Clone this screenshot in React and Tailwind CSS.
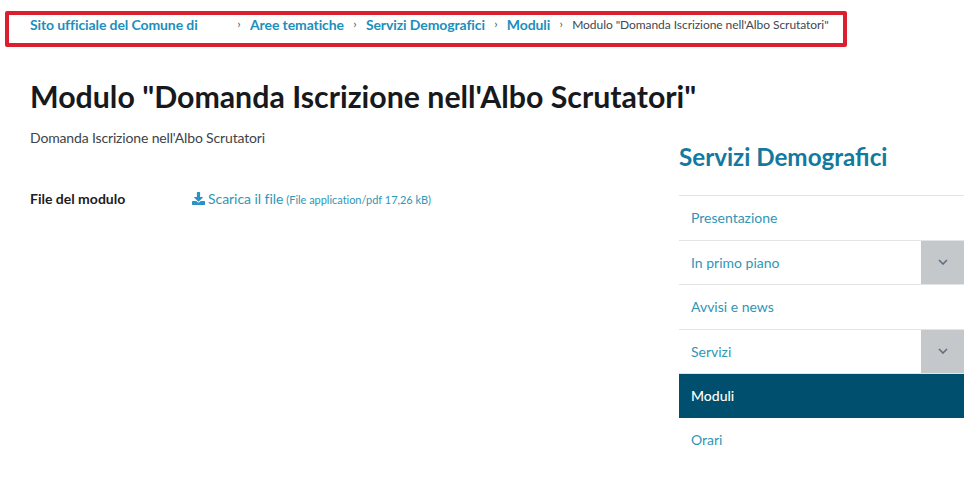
import React from "react";

function Chevron() {
  return (
    <svg width="10" height="6" viewBox="0 0 10 6" fill="none" stroke="#5c6f82" strokeWidth="1.6">
      <path d="M1 1l4 4 4-4" />
    </svg>
  );
}

function Sep() {
  return <span className="w-[22px] text-center text-[#4a5560] text-[12px]">›</span>;
}

function Crumb({ children }) {
  return (
    <>
      <span className="font-bold text-[#1b8fbd] text-[14px] tracking-[-0.1px] whitespace-nowrap">{children}</span>
      <Sep />
    </>
  );
}

function NavRow({ label, expand, active }) {
  return (
    <div
      className={
        "flex h-[44.5px] border-t border-[#e3e4e6] items-stretch " +
        (active ? "bg-[#004f6e] border-[#004f6e]" : "")
      }
    >
      <span className={"flex-1 pl-3 flex items-center text-[14px] " + (active ? "text-white font-medium" : "text-[#2f96b6]")}>
        {label}
      </span>
      {expand && (
        <span className="w-[43px] bg-[#c5c8cb] flex items-center justify-center">
          <Chevron />
        </span>
      )}
    </div>
  );
}

export default function App() {
  return (
    <div className="w-[974px] h-[477px] overflow-hidden bg-white font-['Lato','Open_Sans',sans-serif] text-[#1c2024]">
      <div className="pt-[11px] pl-[5px]">
        <nav className="w-[842px] h-[36px] border-[4px] border-[#dc1f2e] rounded-[2px] flex items-center pl-[21px] pb-[10px]">
          <span className="font-bold text-[#1b8fbd] text-[14px] tracking-[-0.1px] w-[198px] whitespace-nowrap">Sito ufficiale del Comune di</span>
          <Sep />
          <Crumb>Aree tematiche</Crumb>
          <Crumb>Servizi Demografici</Crumb>
          <Crumb>Moduli</Crumb>
          <span className="mt-[2px] text-[#3f4750] text-[12px] tracking-[-0.06px] whitespace-nowrap">Modulo "Domanda Iscrizione nell'Albo Scrutatori"</span>
        </nav>
      </div>
      <div className="flex pl-[30px] pt-[29px]">
        <main className="w-[649px] shrink-0">
          <h1 className="text-[30.3px] leading-[40px] font-bold whitespace-nowrap text-[#17191c]">Modulo "Domanda Iscrizione nell'Albo Scrutatori"</h1>
          <p className="mt-[12px] text-[14px] tracking-[-0.15px] leading-[20px] text-[#3d4349]">Domanda Iscrizione nell'Albo Scrutatori</p>
          <div className="flex items-center mt-[40px]">
            <span className="w-[162px] text-[14px] font-bold">File del modulo</span>
            <svg width="13" height="13" viewBox="0 0 512 512" fill="#2a93c5" className="mr-[3px]">
              <path d="M216 0h80c13 0 24 11 24 24v168h88c18 0 27 21 14 34L270 378c-8 8-20 8-28 0L90 226c-13-13-4-34 14-34h88V24c0-13 11-24 24-24zm296 376v112c0 13-11 24-24 24H24c-13 0-24-11-24-24V376c0-13 11-24 24-24h147l49 49c20 20 52 20 72 0l49-49h147c13 0 24 11 24 24z" />
            </svg>
            <span className="flex items-baseline whitespace-nowrap text-[#2f96b6]">
              <span className="text-[14px] tracking-[-0.05px]">Scarica il file</span>
              <span className="text-[11px] tracking-[-0.03px] ml-[3px]">(File application/pdf 17,26 kB)</span>
            </span>
          </div>
        </main>
        <aside className="w-[285px] shrink-0 mt-[65px]">
          <h2 className="text-[24.2px] leading-[32px] font-bold text-[#13799f] whitespace-nowrap">Servizi Demografici</h2>
          <div className="mt-[22px]">
            <NavRow label="Presentazione" />
            <NavRow label="In primo piano" expand />
            <NavRow label="Avvisi e news" />
            <NavRow label="Servizi" expand />
            <NavRow label="Moduli" active />
            <div className="flex h-[44px] items-center pl-3 text-[14px] text-[#2f96b6]">Orari</div>
          </div>
        </aside>
      </div>
    </div>
  );
}
